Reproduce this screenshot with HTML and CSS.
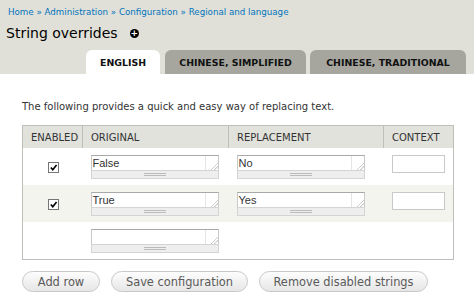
FILE: index.html
```html
<!DOCTYPE html>
<html lang="en">
<head>
    <meta charset="UTF-8">
    <title>String overrides</title>
    <link rel="stylesheet" href="styles.css">
</head>
<body>
    <!--header band-->
    <div class="head">
        <div class="crumbs">
            <a href="#">Home</a> » <a href="#">Administration</a> » <a href="#">Configuration</a> » <a href="#">Regional and language</a>
        </div>
        <h1>String overrides <span class="plus">+</span></h1>
        <ul class="tabs">
            <li class="on">ENGLISH</li>
            <li>CHINESE, SIMPLIFIED</li>
            <li>CHINESE, TRADITIONAL</li>
        </ul>
    </div>

    <div class="page">
        <p class="intro">The following provides a quick and easy way of replacing text.</p>

        <table class="strings">
            <thead>
                <tr>
                    <th class="c-en">ENABLED</th>
                    <th class="c-or">ORIGINAL</th>
                    <th class="c-re">REPLACEMENT</th>
                    <th class="c-cx">CONTEXT</th>
                </tr>
            </thead>
            <tbody>
                <tr>
                    <td class="c-en"><span class="chk"><svg viewBox="0 0 10 10"><path d="M2 5 L4.2 7.4 L8.4 2.2" /></svg></span></td>
                    <td><div class="area"><div class="box">False<span class="grip-c"></span></div><div class="grip"></div></div></td>
                    <td><div class="area"><div class="box">No<span class="grip-c"></span></div><div class="grip"></div></div></td>
                    <td><div class="ctx"></div></td>
                </tr>
                <tr class="even">
                    <td class="c-en"><span class="chk"><svg viewBox="0 0 10 10"><path d="M2 5 L4.2 7.4 L8.4 2.2" /></svg></span></td>
                    <td><div class="area"><div class="box">True<span class="grip-c"></span></div><div class="grip"></div></div></td>
                    <td><div class="area"><div class="box">Yes<span class="grip-c"></span></div><div class="grip"></div></div></td>
                    <td><div class="ctx"></div></td>
                </tr>
                <tr>
                    <td class="c-en"></td>
                    <td><div class="area"><div class="box"><span class="grip-c"></span></div><div class="grip"></div></div></td>
                    <td></td>
                    <td></td>
                </tr>
            </tbody>
        </table>

        <div class="actions">
            <button class="btn b1">Add row</button>
            <button class="btn b2">Save configuration</button>
            <button class="btn b3">Remove disabled strings</button>
        </div>
    </div>
</body>
</html>
```

FILE: styles.css
```css
html,
body {
    margin: 0;
    padding: 0;
}

body {
    background: #fff;
    font-family: "DejaVu Sans", Verdana, sans-serif;
    color: #333;
    width: 474px;
    height: 304px;
    overflow: hidden;
}

/*header band*/
.head {
    background: #e0e0d8;
    padding: 6px 8px 0 8px;
    height: 68px;
    display: flex;
    flex-direction: column;
}

.crumbs {
    font-size: 8.7px;
    line-height: 12px;
    color: #0074bd;
    height: 12px;
    white-space: nowrap;
}

.crumbs a {
    color: #0074bd;
    text-decoration: none;
}

h1 {
    margin: 6px 0 0 -2px;
    font-size: 14px;
    font-weight: normal;
    color: #000;
    line-height: 18px;
    display: flex;
    align-items: center;
    gap: 12px;
}

.plus {
    display: inline-flex;
    width: 9px;
    height: 9px;
    border-radius: 50%;
    background: #000;
    color: #fff;
    font-size: 9px;
    font-weight: bold;
    line-height: 9px;
    justify-content: center;
    align-items: center;
}

.tabs {
    margin: auto 0 0 0;
    padding: 0;
    list-style: none;
    display: flex;
    justify-content: flex-end;
    gap: 5px;
}

.tabs li {
    height: 24px;
    line-height: 25px;
    background: #a6a69e;
    border-radius: 6px 6px 0 0;
    font-size: 9.4px;
    font-weight: bold;
    color: #111;
    text-align: center;
    white-space: nowrap;
}

.tabs li:nth-child(1) { width: 74px; }
.tabs li:nth-child(2) { width: 141px; }
.tabs li:nth-child(3) { width: 156px; margin-left: -1px; }

.tabs li.on {
    background: #fff;
}

/*content*/
.page {
    padding: 0 20px 0 22px;
}

.intro {
    margin: 27px 0 0 0;
    font-size: 10px;
    line-height: 12px;
    color: #333;
    white-space: nowrap;
}

.strings {
    margin-top: 12px;
    width: 432px;
    border-collapse: collapse;
    border: 1px solid #bebfb9;
    border-top: 0;
}

.strings th {
    background: #e1e2dc;
    border: 1px solid #bebfb9;
    border-bottom: 0;
    height: 22px;
    padding: 0 0 0 8px;
    font-size: 10px;
    font-weight: normal;
    text-align: left;
    color: #333;
    white-space: nowrap;
}

.strings th.c-en { width: 51px; }
.strings th.c-or { width: 137px; }
.strings th.c-re { width: 146px; }

.strings td {
    padding: 0 0 0 8px;
    height: 37px;
    vertical-align: middle;
}

.strings tr.even td {
    background: #f3f4ee;
}

.strings td.c-en {
    text-align: center;
    padding: 0 0 0 2px;
}

.chk {
    display: inline-block;
    width: 9px;
    height: 9px;
    border: 1px solid #767676;
    background: #fff;
    vertical-align: middle;
}

.chk svg {
    width: 9px;
    height: 9px;
    display: block;
    fill: none;
    stroke: #000;
    stroke-width: 1.8;
}

/*textarea look*/
.area {
    width: 128px;
}

.box {
    position: relative;
    height: 14px;
    border: 1px solid #c9c9c9;
    border-top-color: #a8a8a8;
    border-bottom: 0;
    background: #fff;
    font-family: "Liberation Sans", Arial, sans-serif;
    font-size: 11px;
    line-height: 15px;
    padding-left: 1px;
    color: #333;
}

.grip-c {
    position: absolute;
    right: 0;
    top: 0;
    width: 12px;
    height: 14px;
    border-left: 1px solid #e4e4e4;
    background: linear-gradient(135deg, transparent 70%, #aaa 71%, transparent 76%, transparent 84%, #aaa 85%, transparent 90%);
}

.grip {
    height: 7px;
    border: 1px solid #d4d4d4;
    background: #eee;
    position: relative;
}

.grip::after {
    content: "";
    position: absolute;
    left: 50%;
    top: 2px;
    width: 22px;
    margin-left: -11px;
    height: 1px;
    border-top: 1px solid #bbb;
    border-bottom: 1px solid #bbb;
}

.ctx {
    width: 51px;
    height: 16px;
    border: 1px solid #c9c9c9;
    background: #fff;
    margin-top: -5px;
}

/*buttons*/
.actions {
    margin-top: 11px;
    display: flex;
    gap: 11px;
}

.btn {
    height: 21px;
    border: 1px solid #c8c8c8;
    border-radius: 11px;
    background: linear-gradient(to bottom, #fdfdfd, #e6e6e6);
    font-family: "DejaVu Sans", Verdana, sans-serif;
    font-size: 11.4px;
    color: #5a5a5a;
    padding: 0;
    white-space: nowrap;
}

.b1 { width: 78px; }
.b2 { width: 137px; }
.b3 { width: 169px; }
```
